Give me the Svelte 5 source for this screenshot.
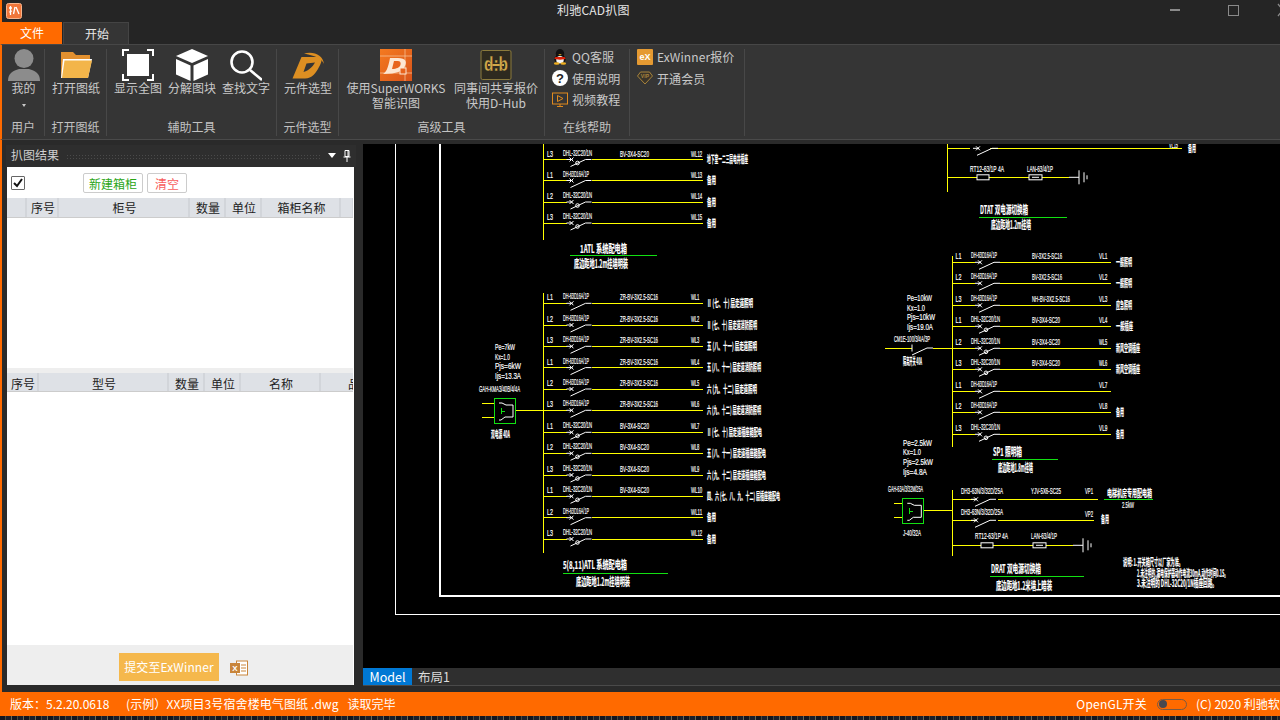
<script>
  const G1 = 'DH-63D16A/1P', G2 = 'DHL-32C20/1N', C1 = 'BV-3X4-SC20', C2 = 'ZR-BV-3X2.5-SC16', C3 = 'BV-3X2.5-SC16';

  // one circuit: line y, phase, breaker, cable, cable end x, name, description, description end x
  const sectionA = [
    [159.5, 'L3', G2, C1, 649, 'WL12', '地下室一二三层电井插座', 748],
    [180.5, 'L1', G1, '', 0, 'WL13', '备用', 716],
    [202, 'L2', G2, '', 0, 'WL14', '备用', 716],
    [223, 'L3', G2, '', 0, 'WL15', '备用', 716]
  ];
  const sectionB = [
    [303.3, 'L1', G1, C2, 658, 'WL1', 'Ⅱ (七、十) 层走道照明', 753],
    [325, 'L2', G1, C2, 658, 'WL2', 'Ⅱ (七、十) 层走道消防照明', 757],
    [346.3, 'L3', G1, C2, 658, 'WL3', '五 (八、十一) 层走道照明', 757],
    [367.6, 'L1', G1, C2, 658, 'WL4', '五 (八、十一) 层走道消防照明', 761],
    [389, 'L2', G1, C2, 658, 'WL5', '六 (九、十二) 层走道照明', 757],
    [410.3, 'L3', G1, C2, 658, 'WL6', '六 (九、十二) 层走道消防照明', 761],
    [432.3, 'L1', G2, C1, 649, 'WL7', 'Ⅱ (七、十) 层走道插座箱配电', 762],
    [453.3, 'L2', G2, C1, 649, 'WL8', '五 (八、十一) 层走道插座箱配电', 766],
    [475, 'L3', G2, C1, 649, 'WL9', '六 (九、十二) 层走道插座箱配电', 766],
    [496.3, 'L1', G2, C1, 649, 'WL10', '四、六 (七、八、九、十二) 层插座箱配电', 780],
    [517.7, 'L2', G1, '', 0, 'WL11', '备用', 716],
    [539, 'L3', G2, '', 0, 'WL12', '备用', 716]
  ];
  const sectionD = [
    [262.3, 'L1', G1, C3, 1062, 'VL1', '一般照明', 1132],
    [283.3, 'L2', G1, C3, 1062, 'VL2', '一般照明', 1132],
    [305.3, 'L3', G1, 'NH-BV-3X2.5-SC16', 1070, 'VL3', '应急照明', 1132],
    [326.3, 'L1', G2, C1, 1060, 'VL4', '一般插座', 1133],
    [348.3, 'L2', G2, C1, 1060, 'WL5', '新风空调插座', 1140],
    [369.3, 'L3', G2, C1, 1060, 'WL6', '新风空调插座', 1140],
    [391.3, 'L1', G1, '', 0, 'VL7', '', 0],
    [412.3, 'L2', G1, '', 0, 'VL8', '备用', 1124],
    [434.3, 'L3', G2, '', 0, 'VL9', '备用', 1124]
  ];

  const sections = [
    { rows: sectionA, bus: 543.5, end: 703, g: 563, gs: 589, gl: 592, c: 620, n: 691, d: 707 },
    { rows: sectionB, bus: 543.5, end: 703, g: 563, gs: 589, gl: 592, c: 620, n: 691, d: 707 },
    { rows: sectionD, bus: 952, end: 1111, g: 971, gs: 997, gl: 1000, c: 1032, n: 1099, d: 1116 }
  ];

  // free labels: x1, x2, centre y, text, class
  const labels = [
    [580, 627, 250, '1ATL 系统配电箱', 'ti'], [574, 628, 265, '底边距地1.2m挂墙明装', 'ti'],
    [563, 627, 566, '5(8,11)ATL 系统配电箱', 'ti'], [576, 630, 583, '底边距地1.2m挂墙明装', 'ti'],
    [980, 1028, 211, 'DTAT 双电源切换箱', 'ti'], [991, 1031, 226, '底边距地1.2m挂墙', 'ti'],
    [993, 1022, 453, 'SP1 照明箱', 'ti'], [998, 1033, 469, '底边距地1.8m挂墙', 'ti'],
    [991, 1041, 570, 'DRAT 双电源切换箱', 'ti'], [996, 1052, 587, '底边距地1.2米墙上暗装', 'ti'],
    [1123, 1183, 563, '说明: 1.开关箱尺寸以厂家为准。', 'cn'],
    [1137, 1228, 574, '2.未注明的,漏电保护器动作电流30mA,动作时间0.1S。', 'cn'],
    [1137, 1217, 584, '3.未注明的 DHL-32C20/1N插座回路。', 'cn'],
    [495, 515, 347, 'Pe=7kW', 'en'], [495, 510, 357, 'Kx=1.0', 'en'], [495, 521, 366, 'Pjs=6kW', 'en'], [495, 521, 376, 'Ijs=13.3A', 'en'],
    [479, 520, 389, 'GAH-KMA3/40B/4/4A', 'en'], [491, 510, 435, '双电源 40A', 'cn'],
    [907, 932, 298, 'Pe=10kW', 'en'], [907, 925, 307.5, 'Kx=1.0', 'en'], [907, 935, 317, 'Pjs=10kW', 'en'], [907, 933, 327, 'Ijs=19.0A', 'en'],
    [894, 930, 339, 'CM1E-100/3/4A/3P', 'en'], [903, 922, 362, '隔离开关 40A', 'cn'],
    [903, 932, 443, 'Pe=2.5kW', 'en'], [903, 921, 452, 'Kx=1.0', 'en'], [903, 933, 462, 'Pjs=2.5kW', 'en'], [903, 927, 472, 'Ijs=4.8A', 'en'],
    [888, 923, 489, 'GAH-63A/3/32M/25A', 'en'], [903, 921, 533, 'J-40/32A', 'en'],
    [961, 1003, 491, 'DH3-63N/3/32D/25A', 'en'], [1031, 1061, 491, 'YJV-5X6-SC25', 'en'], [1085, 1093, 491, 'VP1', 'en'],
    [961, 1003, 512, 'DH3-63N/3/32D/25A', 'en'], [1085, 1093, 514, 'VP2', 'en'],
    [1107, 1152, 494, '电梯机房专用配电箱', 'cn'], [1122, 1134, 505, '2.5kW', 'en'], [1101, 1109, 520, '备用', 'cn'],
    [975, 1008, 536, 'RT12-63/1P 4A', 'en'], [1031, 1057, 536, 'LAN-63/4/1P', 'en'],
    [970, 1004, 169, 'RT12-63/1P 4A', 'en'], [1027, 1053, 169, 'LAN-63/4/1P', 'en'],
    [1169, 1178, 144.5, 'VL15', 'en'], [1188, 1196, 149, '备用', 'cn']
  ];

  const greenLines = [[570, 657, 255], [563, 668, 573], [979, 1067, 217], [992, 1058, 459], [990, 1084, 576], [1104, 1153, 499]];
  const buses = [[543.5, 144, 240], [543.5, 293, 553], [947.7, 144, 192], [952, 256, 447], [952, 490, 556]];
  const plain = [[482, 494, 403], [482, 494, 417], [515, 543, 410], [885, 912, 348], [933, 952, 348], [894, 902, 503], [894, 902, 517], [924, 952, 510], [948, 970, 148.3], [990, 1182, 148.3], [952, 976, 499.3], [998, 1098, 499.3], [952, 976, 520.3], [998, 1094, 520.3]];
  const extraSwitches = [[976, 499.3], [976, 520.3], [978, 148.3]];
  const fuses = [[948, 1079, 177.3, 977, 1029], [952, 1083, 545.3, 981, 1033]];
  const boxes = [[494, 398], [902.3, 498.3]];

  const topCols = [[20, ''], [32, '序号'], [131, '柜号'], [36, '数量'], [36, '单位'], [79, '箱柜名称'], [13, '']];
  const bottomCols = [[32, '序号'], [130, '型号'], [36, '数量'], [36, '单位'], [80, '名称'], [66, '品']];
</script>

<div class="app">
  <header class="titlebar">
    <svg class="appicon" viewBox="0 0 16 16">
      <rect x="0.5" y="0.5" width="15" height="15" rx="2" fill="#f0763a" stroke="#f6b48c" />
      <path d="M3 5h3M4.5 3v9M3 9l3-1M9 4l-1.500 7M10 4l3 7" stroke="#fff" stroke-width="1.300" fill="none" />
    </svg>
    <span class="apptitle">利驰CAD扒图</span>
    <div class="winbtns">
      <span class="win-min"></span>
      <span class="win-max"></span>
      <svg class="win-close" viewBox="0 0 6 14"><path d="M1 1l5 6-5 6" stroke="#8a8a8a" stroke-width="1.300" fill="none" /></svg>
    </div>
  </header>

  <nav class="tabs">
    <div class="tab-file">文件</div>
    <div class="tab-start">开始</div>
  </nav>

  <section class="ribbon">
    <div class="group" style="width:43px">
      <div class="items">
        <div class="item" style="width:43px">
          <svg class="big" viewBox="0 0 32 32">
            <circle cx="16" cy="9.500" r="9.500" fill="#8c8c8c" />
            <path d="M0 32c0-8 5-10 11-12h10c6 2 11 4 11 12z" fill="#8c8c8c" />
          </svg>
          <span class="name">我的</span>
          <span class="caret"></span>
        </div>
      </div>
      <div class="glabel">用户</div>
    </div>

    <div class="group" style="width:62px">
      <div class="items">
        <div class="item" style="width:62px">
          <svg class="big" viewBox="0 0 32 32">
            <path d="M1 29V3h12l3 3h14v5H8z" fill="#e2902f" />
            <path d="M3 10h29l-4 19H1z" fill="#fff" />
            <path d="M4.500 11.500H32L28 29H2z" fill="#f3b54a" />
          </svg>
          <span class="name">打开图纸</span>
        </div>
      </div>
      <div class="glabel">打开图纸</div>
    </div>

    <div class="group" style="width:170px">
      <div class="items">
        <div class="item" style="width:62px">
          <svg class="big" viewBox="0 0 32 32">
            <rect x="5" y="5" width="22" height="22" fill="#fff" />
            <path d="M1 7V1h6M25 1h6v6M31 25v6h-6M7 31H1v-6" stroke="#fff" stroke-width="2" fill="none" />
          </svg>
          <span class="name">显示全图</span>
        </div>
        <div class="item" style="width:46px">
          <svg class="big" viewBox="0 0 32 32">
            <path d="M16 0l16 7-16 7L0 7z" fill="#fff" />
            <path d="M0 10l14.500 6.500V32L0 25.500z" fill="#fff" />
            <path d="M32 10l-14.500 6.500V32L32 25.500z" fill="#fff" />
          </svg>
          <span class="name">分解图块</span>
        </div>
        <div class="item" style="width:62px">
          <svg class="big" viewBox="0 0 32 32">
            <circle cx="12" cy="13" r="10.500" stroke="#fff" stroke-width="2.600" fill="none" />
            <path d="M20 21l12 10" stroke="#fff" stroke-width="2.600" fill="none" />
          </svg>
          <span class="name">查找文字</span>
        </div>
      </div>
      <div class="glabel">辅助工具</div>
    </div>

    <div class="group" style="width:62px">
      <div class="items">
        <div class="item" style="width:62px">
          <svg class="big" viewBox="0 0 32 32">
            <path fill-rule="evenodd" d="M0.500 29.500L9.500 8H26C31 8 30 13 27 18 24 24 20 29.500 13 29.500ZM14.500 14.500L23 13.500C21 17 18 21 11.500 23Z" fill="#dd8f22" />
            <path d="M12 4.500C22 2 31 6 32 15 30 10 24 7 12 4.500Z" fill="#dd8f22" />
          </svg>
          <span class="name">元件选型</span>
        </div>
      </div>
      <div class="glabel">元件选型</div>
    </div>

    <div class="group" style="width:206px">
      <div class="items">
        <div class="item" style="width:114px">
          <svg class="big" viewBox="0 0 32 32">
            <defs>
              <linearGradient id="sw" x1="0" y1="0" x2="1" y2="1">
                <stop offset="0" stop-color="#f47a20" />
                <stop offset="1" stop-color="#d9541a" />
              </linearGradient>
            </defs>
            <rect width="32" height="32" fill="url(#sw)" />
            <path d="M0 7h32M25 0v32M0 24h32" stroke="#f8c9a0" stroke-width="0.700" />
            <path d="M10 9h8c8 0 9 4 7 8-2 5-8 8-22 8 3-2 5-5 7-16z" fill="#fde6d2" />
            <path d="M14 12h4c3 0 3 3 2 5-1 1-3 3-8 3z" fill="#e8631c" />
            <rect x="20" y="19" width="6" height="6" fill="#e8631c" stroke="#fde6d2" />
          </svg>
          <span class="name">使用SuperWORKS</span>
          <span class="name">智能识图</span>
        </div>
        <div class="item" style="width:86px">
          <svg class="big" viewBox="0 0 32 32">
            <rect x="1" y="1.500" width="30" height="29" rx="1.500" fill="#2e2a1f" stroke="#8b7a3c" />
            <path d="M8 16h16" stroke="#d2a94a" stroke-width="2" />
            <text class="logo" x="16" y="22" text-anchor="middle" textLength="24" lengthAdjust="spacingAndGlyphs">d:b</text>
          </svg>
          <span class="name">同事间共享报价</span>
          <span class="name">快用D-Hub</span>
        </div>
      </div>
      <div class="glabel">高级工具</div>
    </div>

    <div class="group" style="width:85px">
      <div class="small-list">
        <div class="small">
          <svg class="ico" viewBox="0 0 16 17">
            <ellipse cx="8" cy="5" rx="4.500" ry="5" fill="#111" />
            <ellipse cx="8" cy="11" rx="6" ry="5" fill="#111" />
            <ellipse cx="8" cy="11.500" rx="4" ry="4" fill="#f4f4f4" />
            <path d="M3 8.500h10l1 2-6 1-6-1z" fill="#d81e06" />
            <ellipse cx="4.500" cy="15.500" rx="3" ry="1.300" fill="#f0b020" />
            <ellipse cx="11.500" cy="15.500" rx="3" ry="1.300" fill="#f0b020" />
            <path d="M6 5.500h4l-2 1.500z" fill="#f0b020" />
          </svg>
          <span>QQ客服</span>
        </div>
        <div class="small">
          <svg class="ico" viewBox="0 0 16 16">
            <circle cx="8" cy="8" r="8" fill="#fff" />
            <text class="q" x="8" y="12.500" text-anchor="middle">?</text>
          </svg>
          <span>使用说明</span>
        </div>
        <div class="small">
          <svg class="ico" viewBox="0 0 16 16">
            <rect x="0.500" y="1" width="15" height="11" fill="none" stroke="#e08a1e" />
            <path d="M5.500 3.500l5.500 3-5.500 3z" fill="none" stroke="#e08a1e" />
            <path d="M8 12v2M5 14.500h6" stroke="#e08a1e" />
          </svg>
          <span>视频教程</span>
        </div>
      </div>
      <div class="glabel">在线帮助</div>
    </div>

    <div class="group" style="width:115px">
      <div class="small-list">
        <div class="small">
          <svg class="ico" viewBox="0 0 16 16">
            <rect width="16" height="16" rx="1" fill="#e59a32" />
            <text class="ex" x="8" y="11" text-anchor="middle">eX</text>
          </svg>
          <span>ExWinner报价</span>
        </div>
        <div class="small">
          <svg class="ico" viewBox="0 0 16 14">
            <path d="M3.500 1h9L15.500 5 8 13 .5 5z" fill="#3a342a" stroke="#a8843c" />
            <text class="vip" x="8" y="7" text-anchor="middle">VIP</text>
          </svg>
          <span>开通会员</span>
        </div>
      </div>
      <div class="glabel"></div>
    </div>
  </section>

  <main class="work">
    <aside class="panel">
      <div class="panel-head">
        <span class="head-title">扒图结果</span>
        <div class="grip"></div>
        <span class="tri"></span>
        <svg class="pin" viewBox="0 0 8 12">
          <path d="M2 .5h4v6H2zM.5 7h7M4 7v5M5 1v5" stroke="#fff" fill="none" />
        </svg>
      </div>

      <div class="panel-body">
        <div class="toolbar">
          <span class="check">
            <svg viewBox="0 0 12 12"><path d="M2 6l3 3 5-7" stroke="#111" stroke-width="2" fill="none" /></svg>
          </span>
          <button class="btn green">新建箱柜</button>
          <button class="btn red">清空</button>
        </div>
        <div class="thead">
          {#each topCols as [w, label]}
            <div class="th" style="width:{w}px">{label}</div>
          {/each}
        </div>
        <div class="tbody-top"></div>
        <div class="gap"></div>
        <div class="thead second">
          {#each bottomCols as [w, label]}
            <div class="th" style="width:{w}px">{label}</div>
          {/each}
        </div>
        <div class="tbody-bottom"></div>
        <div class="submit-bar">
          <button class="submit">提交至ExWinner</button>
          <svg class="excel" viewBox="0 0 18 16">
            <rect x="6.500" y="1" width="11" height="14" fill="#fff" stroke="#c9853a" />
            <path d="M11 5h5M11 8h5M11 11h5" stroke="#c9853a" />
            <rect x="0" y="3" width="10" height="10" fill="#c9853a" />
            <text class="xl" x="5" y="11" text-anchor="middle">X</text>
          </svg>
        </div>
      </div>
    </aside>

    <div class="cad">
      <svg class="drawing" viewBox="363 144 917 524">
        <!-- drawing frame -->
        <path class="frame" d="M395.500 144V614.500H1280" />
        <path class="frame inner" d="M440 144V596H1280" />

        {#each buses as [x, y1, y2]}
          <line class="y" x1={x} x2={x} y1={y1} y2={y2} />
        {/each}
        {#each plain as [x1, x2, y]}
          <line class="y" x1={x1} x2={x2} y1={y} y2={y} />
        {/each}
        {#each greenLines as [x1, x2, y]}
          <line class="g" x1={x1} x2={x2} y1={y} y2={y} />
        {/each}

        {#each sections as s}
          {#each s.rows as [y, phase, breaker, cable, cableEnd, name, desc, descEnd]}
            {@const sx = s.bus + 28}
            <line class="y" x1={s.bus} x2={sx - 5} y1={y} y2={y} />
            <line class="y" x1={sx + 20} x2={s.end} y1={y} y2={y} />
            <path class="w" d="M{sx - 5} {y}H{sx + 1}M{sx - 2} {y - 2}l4 4m0-4l-4 4M{sx - 1} {y + 7}L{sx + 14} {y}H{sx + 20}" />
            {#if breaker === G2}
              <circle class="w" cx={sx + 6} cy={y + 3.5} r="1.800" />
            {/if}
            <text class="t en" x={s.bus + 3.5} y={y - 3} textLength="6" lengthAdjust="spacingAndGlyphs">{phase}</text>
            <text class="t en" x={s.g} y={y - 4} textLength={(breaker === G2 ? s.gl : s.gs) - s.g} lengthAdjust="spacingAndGlyphs">{breaker}</text>
            {#if cable}
              <text class="t en" x={s.c} y={y - 3} textLength={cableEnd - s.c} lengthAdjust="spacingAndGlyphs">{cable}</text>
            {/if}
            <text class="t en" x={s.n} y={y - 3} textLength={name.length * 2.800} lengthAdjust="spacingAndGlyphs">{name}</text>
            {#if desc}
              <text class="t cn" x={s.d} y={y + 3.500} textLength={descEnd - s.d} lengthAdjust="spacingAndGlyphs">{desc}</text>
            {/if}
          {/each}
        {/each}

        {#each extraSwitches as [sx, y]}
          <path class="w" d="M{sx - 5} {y}H{sx + 1}M{sx - 2} {y - 2}l4 4m0-4l-4 4M{sx - 1} {y + 7}L{sx + 14} {y}H{sx + 20}" />
        {/each}
        <path class="w" d="M912 344.500v7M912 355L927 348H933" />

        {#each fuses as [x1, x2, y, a, b]}
          <line class="y" x1={x1} x2={a} y1={y} y2={y} />
          <line class="y" x1={a + 12} x2={b} y1={y} y2={y} />
          <line class="y" x1={b + 13} x2={x2 - 10} y1={y} y2={y} />
          <line class="w" x1={x2 - 10} x2={x2} y1={y} y2={y} />
          <rect class="w" x={a} y={y - 2.500} width="12" height="5" />
          <rect class="w" x={b} y={y - 2.500} width="13" height="5" />
          <line class="w" x1={b + 3} x2={b + 10} y1={y} y2={y} />
          <path class="w" d="M{x2} {y - 7}V{y + 7}M{x2 + 5} {y - 5}V{y + 5}M{x2 + 8} {y - 2}V{y + 2}" />
        {/each}

        {#each boxes as [x, y]}
          <rect class="g" x={x} y={y} width="21.500" height="25" />
          <path class="w" d="M{x + 5} {y + 5}h3l4 2h7v12h-8l-4 3h-2" />
          <path class="g" d="M{x + 7} {y + 10}v6M{x + 8} {y + 13}h3" />
        {/each}

        {#each labels as [x1, x2, y, text, cls]}
          <text class="t {cls}" x={x1} y={y + 3.200} textLength={x2 - x1} lengthAdjust="spacingAndGlyphs">{text}</text>
        {/each}
      </svg>
      <div class="sheets">
        <span class="sheet active">Model</span>
        <span class="sheet">布局1</span>
      </div>
    </div>
  </main>

  <footer class="status">
    <span class="ver">版本：5.2.20.0618</span>
    <span class="file">(示例）XX项目3号宿舍楼电气图纸 .dwg</span>
    <span class="state">读取完毕</span>
    <span class="spacer"></span>
    <span class="gl">OpenGL开关</span>
    <span class="toggle"><i></i></span>
    <span class="copy">(C) 2020 利驰软件</span>
  </footer>
  <div class="desktop"></div>
</div>

<style>
  :global(body) {
    margin: 0;
    background: #000;
  }

  .app {
    width: 1280px;
    height: 720px;
    overflow: hidden;
    display: flex;
    flex-direction: column;
    font-family: "Noto Sans CJK SC", "Liberation Sans", sans-serif;
    font-size: 12px;
    color: #c9c9c9;
    background: #252525;
  }

  .titlebar {
    height: 22px;
    flex-shrink: 0;
    display: flex;
    align-items: center;
    position: relative;
    border-left: 2px solid #ff6a00;
    box-sizing: border-box;
  }
  .appicon { width: 16px; height: 16px; margin-left: 4px; }
  .apptitle {
    position: absolute;
    left: 555px;
    top: 1px;
    color: #e4e4e4;
    line-height: 17px;
    letter-spacing: 0.2px;
  }
  .winbtns {
    margin-left: auto;
    display: flex;
    align-items: center;
    align-self: flex-start;
    height: 20px;
  }
  .win-min { width: 10px; height: 2px; background: #8a8a8a; margin-right: 48px; }
  .win-max { width: 9px; height: 9px; border: 1px solid #8a8a8a; margin-right: 38px; }
  .win-close { width: 6px; height: 14px; margin-right: -3px; }

  .tabs {
    height: 22px;
    flex-shrink: 0;
    display: flex;
    border-left: 2px solid #ff6a00;
    box-sizing: border-box;
    line-height: 22px;
    text-align: center;
  }
  .tab-file { width: 60px; background: #ff6a00; color: #fff; }
  .tab-start {
    width: 62px;
    padding-left: 2px;
    margin-left: 1px;
    background: #353535;
    border: 1px solid #444;
    border-bottom: none;
    color: #e8e8e8;
    line-height: 21px;
  }

  .ribbon {
    height: 96px;
    flex-shrink: 0;
    display: flex;
    background: #353535;
    border-top: 1px solid #474747;
    border-bottom: 1px solid #4a4a4a;
    border-left: 2px solid #ff6a00;
    box-sizing: border-box;
  }
  .group {
    flex-shrink: 0;
    display: flex;
    flex-direction: column;
    margin: 4px 0 3px;
    border-right: 1px solid #484848;
    box-sizing: border-box;
  }
  .items { flex: 1; display: flex; }
  .item {
    display: flex;
    flex-direction: column;
    align-items: center;
    flex-shrink: 0;
    line-height: 15px;
    white-space: nowrap;
  }
  .big { width: 32px; height: 32px; margin-bottom: -1px; flex-shrink: 0; }
  .caret {
    width: 0;
    height: 0;
    margin-top: 9px;
    border: 2.500px solid transparent;
    border-top: 3px solid #c9c9c9;
  }
  .glabel {
    height: 17px;
    line-height: 15px;
    text-align: center;
    flex-shrink: 0;
    color: #c2c2c2;
  }

  .small-list {
    flex: 1;
    display: flex;
    flex-direction: column;
    gap: 4.500px;
    padding: 0 0 0 7px;
    margin-top: -1px;
  }
  .small {
    display: flex;
    align-items: center;
    gap: 4px;
    height: 17px;
    white-space: nowrap;
    letter-spacing: 0.1px;
  }
  .ico { width: 16px; height: 16px; flex-shrink: 0; }
  .logo {
    font: bold 20px "Liberation Sans", sans-serif;
    fill: #d2a94a;
    stroke: #2e2a1f;
    stroke-width: 0.3;
  }
  .q { font: bold 13px "Liberation Sans", sans-serif; fill: #222; }
  .ex { font: bold 9px "Liberation Sans", sans-serif; fill: #fff; }
  .vip { font: bold 5px "Liberation Sans", sans-serif; fill: #a8843c; }
  .xl { font: bold 8px "Liberation Sans", sans-serif; fill: #fff; }

  .work {
    flex: 1;
    min-height: 0;
    display: flex;
    background: #2a2a2a;
    border-left: 2px solid #ff6a00;
  }

  .panel {
    width: 350px;
    margin: 5px 0 7px 4px;
    display: flex;
    flex-direction: column;
    flex-shrink: 0;
  }
  .panel-head {
    height: 22px;
    flex-shrink: 0;
    display: flex;
    align-items: center;
    padding: 0 5px;
    background: #2e2e2e;
    color: #cfcfcf;
  }
  .head-title { line-height: 17px; margin-top: -3px; }
  .grip {
    flex: 1;
    height: 5px;
    margin: 0 6px 0 7px;
    background-image: radial-gradient(#4a4a4a 0.6px, transparent 0.7px);
    background-size: 3px 3px;
  }
  .tri {
    width: 0;
    height: 0;
    border-left: 4px solid transparent;
    border-right: 4px solid transparent;
    border-top: 5px solid #fff;
    margin-right: 7px;
    margin-top: -2px;
  }
  .pin { width: 8px; height: 12px; }

  .panel-body {
    flex: 1;
    min-height: 0;
    display: flex;
    flex-direction: column;
    background: #eee;
    margin: 0 2px 0 1px;
    border-right: 1px solid #fff;
    color: #222;
  }
  .toolbar {
    height: 31px;
    flex-shrink: 0;
    display: flex;
    align-items: flex-start;
    background: #fff;
  }
  .check {
    width: 12px;
    height: 12px;
    margin: 9px 0 0 4px;
    border: 1px solid #666;
    border-radius: 1px;
    display: block;
  }
  .check svg { display: block; width: 12px; height: 12px; }
  .btn {
    height: 20px;
    padding: 0;
    margin-top: 6px;
    background: #fff;
    border: 1px solid #ccc;
    border-radius: 2px;
    font: inherit;
    line-height: 20px;
  }
  .btn.green { width: 60px; margin-left: 58px; color: #2aa515; }
  .btn.red { width: 40px; margin-left: 4px; color: #f75c5c; }

  .thead {
    height: 20px;
    flex-shrink: 0;
    display: flex;
    overflow: hidden;
    background: #dee1e6;
    border-bottom: 1px solid #ccc;
    box-sizing: border-box;
    line-height: 20px;
  }
  .thead.second { height: 19px; line-height: 21px; }
  .th {
    flex-shrink: 0;
    box-sizing: border-box;
    padding-left: 2px;
    border-right: 2px solid #d2d5da;
    text-align: center;
    overflow: hidden;
    color: #222;
  }
  .tbody-top { height: 150px; flex-shrink: 0; background: #fff; }
  .gap { height: 5px; flex-shrink: 0; }
  .tbody-bottom { height: 253px; flex-shrink: 0; background: #fff; }

  .submit-bar {
    flex: 1;
    display: flex;
    align-items: flex-start;
    padding-left: 112px;
  }
  .submit {
    width: 100px;
    height: 28px;
    margin-top: 8px;
    padding: 0 0 2px;
    background: #f5b84c;
    border: none;
    color: #fff;
    font: inherit;
    letter-spacing: 0.1px;
    white-space: nowrap;
  }
  .excel { width: 18px; height: 16px; margin: 15px 0 0 11px; }

  .cad {
    margin: 4px 0 7px 7px;
    flex: 1;
    min-width: 0;
    display: flex;
    flex-direction: column;
  }
  .drawing {
    display: block;
    width: 917px;
    height: 524px;
    background: #000;
    flex-shrink: 0;
  }
  .frame { fill: none; stroke: #fff; stroke-width: 1; shape-rendering: crispEdges; }
  .frame.inner { stroke-width: 2; }
  .y { stroke: #ffff00; stroke-width: 1; fill: none; shape-rendering: crispEdges; }
  .g { stroke: #12e012; stroke-width: 1; fill: none; shape-rendering: crispEdges; }
  .w { stroke: #fff; stroke-width: 1; fill: none; }
  .t { fill: #fff; stroke: #fff; stroke-width: 0.2; }
  .t.en { font: 9.500px "Liberation Sans", sans-serif; }
  .t.cn { font: bold 10px "Noto Sans CJK SC", sans-serif; }
  .t.ti { font: bold 11px "Noto Sans CJK SC", sans-serif; }

  .sheets {
    height: 17px;
    flex-shrink: 0;
    display: flex;
    background: #2f2f2f;
    border-bottom: 1px solid #4a4a4a;
    font-size: 12.500px;
    line-height: 17px;
    color: #dcdcdc;
  }
  .sheet { padding: 0 6px; }
  .sheet.active { width: 49px; box-sizing: border-box; padding: 0; text-align: center; background: #0078d4; color: #fff; }

  .status {
    height: 24px;
    flex-shrink: 0;
    display: flex;
    align-items: center;
    padding-left: 10px;
    background: #ff6a00;
    color: #fff;
    white-space: nowrap;
    line-height: 24px;
  }
  .ver { width: 116px; }
  .file { margin-right: 9px; letter-spacing: 0.1px; }
  .spacer { flex: 1; }
  .gl { margin-right: 10px; letter-spacing: 0.2px; }
  .toggle {
    width: 27px;
    height: 9px;
    border: 1px solid #7a5a44;
    border-radius: 6px;
    display: flex;
    align-items: center;
    padding-left: 1px;
    margin-right: 9px;
  }
  .toggle i { width: 8px; height: 8px; border-radius: 50%; background: #47484f; display: block; }
  .copy { width: 84px; flex-shrink: 0; }

  .desktop {
    height: 4px;
    flex-shrink: 0;
    background:
      repeating-linear-gradient(90deg, #14161f 0 5px, #4a4a3a 5px 6px, #1c1f2a 6px 11px, #6a6a55 11px 12px);
  }
</style>
